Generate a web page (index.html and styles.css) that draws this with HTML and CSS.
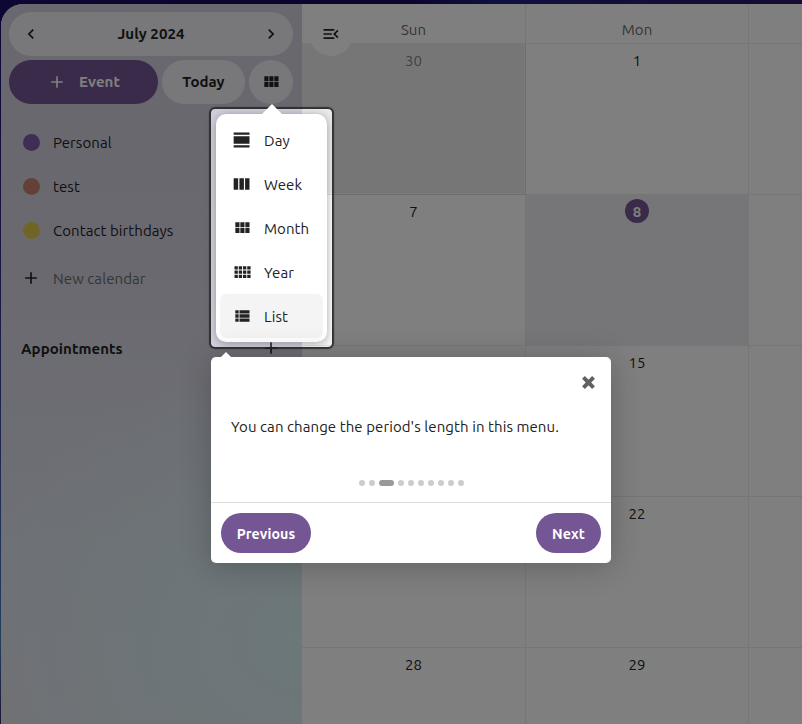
FILE: index.html
```html
<!DOCTYPE html>
<html lang="en">
<head>
<meta charset="utf-8">
<title>Calendar</title>
<link rel="stylesheet" href="styles.css">
</head>
<body>
<div class="app">
  <aside class="sidebar">
    <div class="datebar">
      <svg class="icon" viewBox="0 0 24 24"><path d="M15.41 16.58L10.83 12l4.58-4.59L14 6l-6 6 6 6z"/></svg>
      <span class="month">July 2024</span>
      <svg class="icon" viewBox="0 0 24 24"><path d="M8.59 16.58L13.17 12 8.59 7.41 10 6l6 6-6 6z"/></svg>
    </div>
    <div class="actions">
      <button class="pill event"><svg class="icon" viewBox="0 0 24 24"><path d="M19 13h-6v6h-2v-6H5v-2h6V5h2v6h6z"/></svg><span>Event</span></button>
      <button class="pill today"><span>Today</span></button>
      <button class="pill view"><svg class="icon" viewBox="0 0 24 24"><path d="M4 5h5v6H4zM10 5h5v6h-5zM16 5h5v6h-5zM4 12h5v6H4zM10 12h5v6h-5zM16 12h5v6h-5z"/></svg></button>
    </div>
    <ul class="calendars">
      <li><i class="dot purple"></i><span>Personal</span></li>
      <li><i class="dot orange"></i><span>test</span></li>
      <li><i class="dot yellow"></i><span>Contact birthdays</span></li>
      <li class="new"><svg class="icon" viewBox="0 0 24 24"><path d="M19 13h-6v6h-2v-6H5v-2h6V5h2v6h6z"/></svg><span>New calendar</span></li>
    </ul>
    <div class="appointments">
      <h2>Appointments</h2>
      <svg class="icon" viewBox="0 0 24 24"><path d="M19 13h-6v6h-2v-6H5v-2h6V5h2v6h6z"/></svg>
    </div>
  </aside>
  <main class="grid">
    <div class="head">Sun</div><div class="head">Mon</div><div class="head"></div>
    <div class="cell other">30</div><div class="cell">1</div><div class="cell"></div>
    <div class="cell">7</div><div class="cell now"><b>8</b></div><div class="cell"></div>
    <div class="cell">14</div><div class="cell">15</div><div class="cell"></div>
    <div class="cell">21</div><div class="cell">22</div><div class="cell"></div>
    <div class="cell">28</div><div class="cell">29</div><div class="cell"></div>
  </main>
  <div class="toggle"><svg class="icon" viewBox="0 0 24 24"><path d="M21 15.61L19.59 17l-5.01-5 5.01-5L21 8.39 17.44 12 21 15.61M3 6h13v2H3V6m0 7v-2h10v2H3m0 5v-2h13v2H3z"/></svg></div>
</div>

<div class="spotlight"></div>

<div class="menu">
  <div class="item"><svg class="icon" viewBox="0 0 24 24"><path d="M2 3h19v2.6H2zM2 7.6h19v8.8H2zM2 18.4h19V21H2z"/></svg><span>Day</span></div>
  <div class="item"><svg class="icon" viewBox="0 0 24 24"><path d="M2 5h5.4v14H2zM8.9 5h5.4v14H8.9zM15.7 5H21v14h-5.3z"/></svg><span>Week</span></div>
  <div class="item"><svg class="icon" viewBox="0 0 24 24"><path d="M4 5h5v6H4zM10 5h5v6h-5zM16 5h5v6h-5zM4 12h5v6H4zM10 12h5v6h-5zM16 12h5v6h-5z"/></svg><span>Month</span></div>
  <div class="item"><svg class="icon" viewBox="0 0 24 24"><path d="M3 5h4v4H3zM8.1 5h4v4h-4zM13.2 5h4v4h-4zM18.3 5h4v4h-4zM3 10.1h4v4H3zM8.1 10.1h4v4h-4zM13.2 10.1h4v4h-4zM18.3 10.1h4v4h-4zM3 15.2h4v4H3zM8.1 15.2h4v4h-4zM13.2 15.2h4v4h-4zM18.3 15.2h4v4h-4z"/></svg><span>Year</span></div>
  <div class="item active"><svg class="icon" viewBox="0 0 24 24"><path d="M4 5h4v4H4zM9 5h12v4H9zM4 10h4v4H4zM9 10h12v4H9zM4 15h4v4H4zM9 15h12v4H9z"/></svg><span>List</span></div>
</div>

<section class="tour">
  <header><svg class="close" viewBox="0 0 14 14"><path d="M2.3 2.3l9.4 9.4M11.7 2.3L2.3 11.7"/></svg></header>
  <p>You can change the period's length in this menu.</p>
  <div class="bullets"><i></i><i></i><i class="on"></i><i></i><i></i><i></i><i></i><i></i><i></i><i></i></div>
  <footer><button class="prev"><span>Previous</span></button><button class="next"><span>Next</span></button></footer>
</section>
</body>
</html>
```

FILE: styles.css
```css
* { box-sizing: border-box; }
html, body { height: 100%; }
body {
  margin: 0;
  padding: 4px 0 0 1px;
  overflow: hidden;
  position: relative;
  background:
    linear-gradient(180deg, #1a0f66 0%, #3a3fa0 50%, #4480b8 88%, #3a2a70 100%) 0 30px / 1px 694px no-repeat,
    linear-gradient(90deg, #1a0f66 0%, #130a5c 50%, #20207e 62%, #2c1768 100%);
  font: 15px/20px Ubuntu, "Noto Sans", sans-serif;
  letter-spacing: .075px;
  color: #222;
}
button { border: 0; font: inherit; letter-spacing: inherit; padding: 0; }
.icon { width: 20px; height: 20px; fill: currentColor; flex: none; display: block; }

.app {
  position: relative;
  display: flex;
  height: 720px;
  overflow: hidden;
  border-radius: 22px 0 0 0;
  background: #fff;
}
.sidebar {
  width: 301px;
  flex: none;
  padding: 8px;
  background:
    radial-gradient(ellipse 330px 290px at 100% 88%, #d8f0f4 0%, rgba(216, 240, 244, 0) 100%),
    linear-gradient(180deg, #d3d0de 0%, #d4d2df 35%, #d9dae6 55%, #dde1ea 75%, #e0e2ea 100%);
}
.datebar {
  display: flex;
  align-items: center;
  justify-content: space-between;
  width: 284px;
  height: 44px;
  padding: 0 12px;
  border-radius: 22px;
  background: #f0eff3;
  font-weight: 700;
}
.actions { display: flex; gap: 4px; margin-top: 4px; }
.pill {
  display: flex;
  align-items: center;
  justify-content: center;
  height: 44px;
  border-radius: 22px;
  background: #f0eff3;
  color: #222;
  font-weight: 700;
}
.event { width: 149px; gap: 12px; background: #745694; color: #fff; }
.today { width: 83px; }
.view { width: 44px; }

.calendars { list-style: none; margin: 16px 0 0; padding: 0; }
.calendars li { display: flex; align-items: center; height: 44px; padding-left: 12px; }
.calendars li span { padding-top: 1px; }
.calendars .dot { width: 17px; height: 17px; border-radius: 50%; margin: 0 13px 0 2px; }
.purple { background: #7c5cab; }
.orange { background: #cb8070; }
.yellow { background: #dccb4e; }
.calendars .new { margin-top: 4px; gap: 12px; }
.new span { color: #6b6b6b; }
.appointments { display: flex; align-items: center; justify-content: space-between; height: 44px; margin-top: 26px; padding: 0 13px 0 12px; }
.appointments h2 { margin: 0; font-size: 15px; padding-top: 1px; }

.grid {
  flex: 1;
  display: grid;
  grid-template-columns: 224px 223px 223px;
  grid-template-rows: 40px repeat(5, 151px);
  overflow: hidden;
}
.head, .cell { border-right: 1px solid #ececec; border-bottom: 1px solid #ececec; text-align: center; }
.head { padding-top: 16px; color: #6b6b6b; }
.cell { padding-top: 7px; }
.other { background: #ededed; color: #858585; box-shadow: inset -1px -1px #f6f6f6; border-color: #ddd; }
.now { background: #ececf1; background-clip: padding-box; }
.now b { display: block; width: 24px; height: 24px; line-height: 26px; margin: -3px auto 0; border-radius: 50%; background: #745694; color: #fff; }
.toggle {
  position: absolute;
  left: 308px;
  top: 8px;
  width: 44px;
  height: 44px;
  display: grid;
  place-items: center;
  border-radius: 50%;
  background: #fff;
}

.spotlight {
  position: absolute;
  left: 211px;
  top: 109px;
  width: 121px;
  height: 238px;
  border-radius: 4px;
  box-shadow: 0 0 1px 2px rgba(33, 33, 33, .8), 0 0 0 5000px rgba(0, 0, 0, .5);
}
.menu {
  position: absolute;
  left: 216px;
  top: 114px;
  width: 111px;
  height: 228px;
  padding: 4px;
  border-radius: 10px;
  background: #fff;
  box-shadow: 0 1px 10px rgba(77, 77, 77, .5);
}
.menu::before {
  content: "";
  position: absolute;
  left: 46px;
  top: -10px;
  border: 10px solid transparent;
  border-top: 0;
  border-bottom-color: #fff;
}
.item { display: flex; align-items: center; gap: 12px; height: 44px; padding-left: 12px; border-radius: 6px; }
.item span { padding-top: 2px; }
.item.active { background: #f4f4f4; }

.tour {
  position: absolute;
  left: 211px;
  top: 357px;
  width: 400px;
  height: 206px;
  display: flex;
  flex-direction: column;
  border-radius: 5px;
  background: #fff;
  box-shadow: 0 3px 30px rgba(33, 33, 33, .3);
}
.tour::before {
  content: "";
  position: absolute;
  left: 10px;
  top: -5px;
  border: 5px solid transparent;
  border-top: 0;
  border-bottom-color: #fff;
}
.tour header { display: flex; justify-content: flex-end; height: 60px; padding: 18px 15px 0; }
.close { width: 15px; height: 15px; fill: none; stroke: #616161; stroke-width: 3.7; }
.tour p { margin: 0; padding: 0 20px; white-space: nowrap; }
.bullets { display: flex; justify-content: center; gap: 4px; margin-top: 43px; }
.bullets i { width: 6px; height: 6px; border-radius: 3px; background: #ccc; }
.bullets .on { width: 15px; background: #999; }
.tour footer { display: flex; justify-content: space-between; margin-top: auto; height: 61px; padding: 10px; border-top: 1px solid #ddd; }
.tour footer button { height: 40px; padding-top: 2px; border-radius: 20px; background: #745694; color: #fff; font-weight: 700; font-size: 14.2px; }
.prev { width: 90px; }
.next { width: 65px; }
```
